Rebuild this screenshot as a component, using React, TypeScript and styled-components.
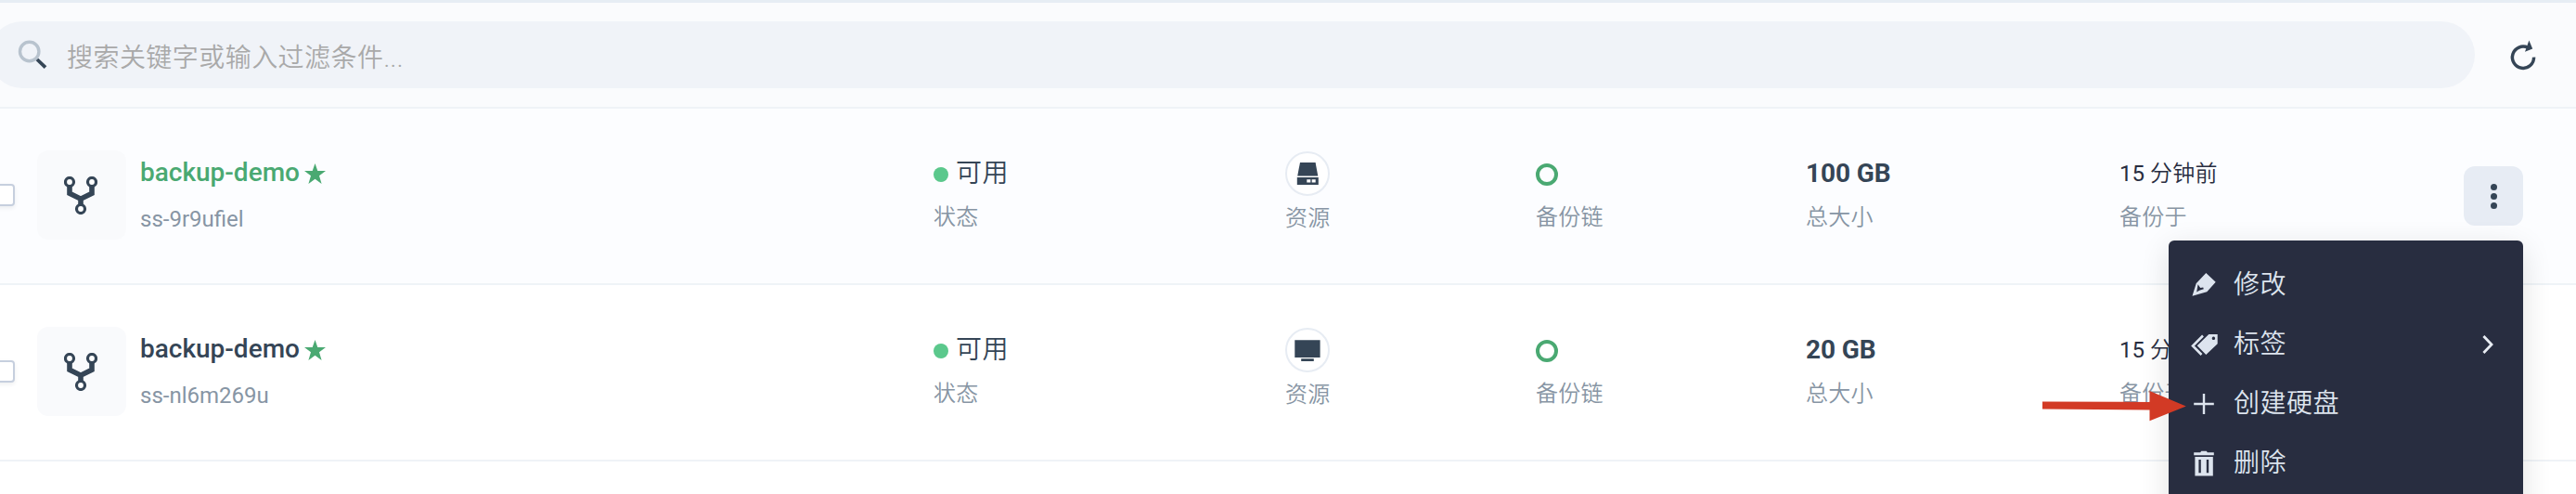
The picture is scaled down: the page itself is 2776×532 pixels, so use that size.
import React from "react";
import styled, { createGlobalStyle } from "styled-components";

const GlobalStyle = createGlobalStyle`
  html, body { margin: 0; padding: 0; }
  body {
    width: 2776px;
    height: 532px;
    overflow: hidden;
    background: #fff;
    font-family: Roboto, "Noto Sans CJK SC", sans-serif;
    color: #354556;
  }
  *, *::before, *::after { box-sizing: border-box; }
`;

const Page = styled.main`
  position: relative;
  width: 2776px;
  height: 532px;
  overflow: hidden;
`;

const Toolbar = styled.header`
  display: flex;
  align-items: flex-start;
  height: 117px;
  padding-top: 20px;
  background: #fafbfd;
  border-top: 3px solid #e6edf4;
  border-bottom: 2px solid #eff3f7;
`;

const SearchBox = styled.label`
  display: flex;
  align-items: center;
  width: 2679px;
  height: 72px;
  margin-left: -12px;
  padding-left: 30px;
  border-radius: 36px;
  background: #f0f3f8;
`;

const SearchText = styled.span`
  margin: 8px 0 0 21px;
  font-size: 28px;
  line-height: 40px;
  font-weight: 350;
  letter-spacing: 0.45px;
  color: #a9a9a9;
`;

const RefreshButton = styled.span`
  display: flex;
  margin: 17px 0 0 35px;
`;

const Row = styled.section<{ $hover?: boolean }>`
  display: flex;
  height: 190px;
  background: ${(p) => (p.$hover ? "#fcfdff" : "#fff")};
  border-bottom: 2px solid #eff3f7;
`;

const Checkbox = styled.span`
  flex: none;
  width: 24px;
  height: 24px;
  margin: 81px 24px 0 -8px;
  border: 2px solid #c6cfde;
  border-radius: 4px;
  background: #fff;
  box-shadow: 0 2px 4px rgba(40, 50, 70, 0.08);
`;

const Tile = styled.span`
  flex: none;
  width: 96px;
  height: 96px;
  margin: 45px 15px 0 0;
  padding: 28px 0 0 29px;
  border-radius: 12px;
  background: #f9fafc;
`;

const Cell = styled.div<{ $width: number }>`
  flex: none;
  display: flex;
  flex-direction: column;
  width: ${(p) => p.$width}px;
  padding-top: 46px;
`;

const Value = styled.div`
  display: flex;
  align-items: center;
  height: 48px;
  font-size: 28px;
  line-height: 48px;
  white-space: nowrap;
`;

const Name = styled(Value)<{ $active?: boolean }>`
  margin-top: -1px;
  font-weight: 500;
  color: ${(p) => (p.$active ? "#4aa972" : "#354556")};
  svg { margin: 2px 0 0 5px; }
`;

const Ident = styled.div`
  margin-top: 6px;
  font-size: 24px;
  line-height: 40px;
  color: #8795a4;
`;

const Label = styled.div<{ $shift?: number }>`
  margin-top: ${(p) => 3 + (p.$shift ?? 0)}px;
  font-size: 24px;
  line-height: 40px;
  font-weight: 350;
  letter-spacing: 0.3px;
  color: #8795a4;
`;

const StatusText = styled.span`
  margin-left: 8px;
  font-weight: 350;
  letter-spacing: 0.4px;
`;

const Dot = styled.i`
  width: 16px;
  height: 16px;
  margin-top: 2px;
  border-radius: 50%;
  background: #5bc88c;
`;

const Ring = styled.i`
  width: 24px;
  height: 24px;
  margin-top: 2px;
  border: 4px solid #4aa972;
  border-radius: 50%;
`;

const ResourceBadge = styled.span`
  display: flex;
  width: 48px;
  height: 48px;
  border: 2px solid #e7ecf3;
  border-radius: 50%;
  background: #fff;
`;

const Size = styled(Value)`
  font-weight: 700;
  letter-spacing: -0.1px;
`;

const Time = styled(Value)`
  font-size: 24px;
  white-space: pre;
  color: #282d40;
  span {
    font-weight: 350;
    letter-spacing: 0.3px;
  }
`;

const MoreButton = styled.span`
  display: flex;
  flex-direction: column;
  align-items: center;
  justify-content: center;
  gap: 3px;
  width: 64px;
  height: 64px;
  margin-top: 62px;
  border-radius: 12px;
  background: #e7ecf4;
  i {
    width: 7px;
    height: 7px;
    border-radius: 50%;
    background: #354556;
  }
`;

const Menu = styled.nav`
  position: absolute;
  left: 2337px;
  top: 259px;
  width: 382px;
  height: 320px;
  padding: 16px 32px 16px 24px;
  border-radius: 6px;
  background: #282d40;
  box-shadow: 0 8px 32px rgba(0, 0, 0, 0.12);
`;

const MenuItem = styled.div`
  display: flex;
  align-items: center;
  height: 64px;
  font-size: 28px;
  line-height: 40px;
  font-weight: 350;
  letter-spacing: 0.5px;
  color: #dde4ee;
  > svg:first-child { margin-right: 14px; }
  > svg:last-child { margin-left: auto; }
`;

const Arrow = styled.svg`
  position: absolute;
  left: 2200px;
  top: 420px;
`;

const SearchIcon = () => (
  <svg width="33" height="32" viewBox="0 0 33 32" fill="none">
    <circle cx="13.7" cy="12.5" r="10.2" stroke="#b8c3ce" strokeWidth="3.4" />
    <path d="M22 21l9 8.6" stroke="#354556" strokeWidth="3.8" />
  </svg>
);

const RefreshIcon = () => (
  <svg width="34" height="36" viewBox="0 0 34 36" fill="none">
    <path d="M22.2 11.4A11.6 11.6 0 1 0 28.6 21.6" stroke="#354556" strokeWidth="3.5" />
    <path d="M23.4 3.6L27.2 12.6L19 15.8z" fill="#354556" />
  </svg>
);

const ForkIcon = () => (
  <svg width="36" height="41" viewBox="0 0 36 41" fill="none" stroke="#354556">
    <path d="M6 10v8.2l12 6 12-6V10M18 24v7" strokeWidth="5.6" />
    <g strokeWidth="3.2" fill="#fff">
      <circle cx="6" cy="6" r="4.5" />
      <circle cx="30" cy="6" r="4.5" />
      <circle cx="18" cy="35" r="4.5" />
    </g>
  </svg>
);

const StarIcon = () => (
  <svg width="23" height="22" viewBox="0 0 23 22">
    <path d="M11.5 0l2.8 8H23l-7 5.2L18.6 22l-7.1-5.3L4.4 22 7 13.2 0 8h8.7z" fill="#4aa972" />
  </svg>
);

const DriveIcon = () => (
  <svg width="44" height="44" viewBox="0 0 44 44" fill="#354556">
    <path d="M14 10h16.6L33.3 24.6H11.2z" />
    <path fillRule="evenodd" d="M10.8 26h23v8h-23zM21.3 28.3v3.2h4v-3.2zM26.7 28.3v3.2h4v-3.2z" />
  </svg>
);

const MonitorIcon = () => (
  <svg width="44" height="44" viewBox="0 0 44 44" fill="#354556">
    <path d="M8.3 11.2h27.3V30H8.3zM15.2 31.3h13.6v2.8H15.2z" />
  </svg>
);

const EditIcon = () => (
  <svg width="32" height="32" viewBox="0 0 32 32" fill="#dde4ee">
    <path
      fillRule="evenodd"
      d="M16.3 3L26.7 12.8L17.3 23.2L1.5 27.8L5.7 14.2zM7.6 15.2L6.2 23.4L9.2 21.8L13.8 20.2L13.2 18.6L10.2 19z"
    />
  </svg>
);

const TagIcon = () => (
  <svg width="32" height="32" viewBox="0 0 32 32" fill="#dde4ee">
    <path fillRule="evenodd" d="M19.3 5h9.4v10.2L16.3 27L6.7 17.3zM24.4 7.6a1.7 1.7 0 1 0 .01 0z" />
    <path d="M13 6.5L2 17.5L11.5 27" fill="none" stroke="#dde4ee" strokeWidth="2.6" />
  </svg>
);

const PlusIcon = () => (
  <svg width="32" height="32" viewBox="0 0 32 32">
    <path d="M14 5v22M3.2 16h21.6" stroke="#dde4ee" strokeWidth="2.4" />
  </svg>
);

const TrashIcon = () => (
  <svg width="32" height="32" viewBox="0 0 32 32" fill="#dde4ee">
    <path d="M3.2 4.2h7l1-1.4h5.6l1 1.4h7v3H3.2z" />
    <path fillRule="evenodd" d="M4.4 9h19.4v20.6H4.4zM8.4 12v14.2h2.4V12zM16.8 12v14.2h2.4V12z" />
  </svg>
);

const ChevronIcon = () => (
  <svg width="12" height="22" viewBox="0 0 12 22" fill="none">
    <path d="M1.4 2l8.6 9-8.6 9" stroke="#e8ecf3" strokeWidth="2.8" />
  </svg>
);

type Snapshot = {
  id: string;
  size: string;
  icon: React.ReactNode;
  active?: boolean;
};

const snapshots: Snapshot[] = [
  { id: "ss-9r9ufiel", size: "100 GB", icon: <DriveIcon />, active: true },
  { id: "ss-nl6m269u", size: "20 GB", icon: <MonitorIcon /> },
];

const menuItems = [
  { label: "修改", icon: <EditIcon /> },
  { label: "标签", icon: <TagIcon />, nested: true },
  { label: "创建硬盘", icon: <PlusIcon /> },
  { label: "删除", icon: <TrashIcon /> },
];

export default function App() {
  return (
    <>
      <GlobalStyle />
      <Page>
        <Toolbar>
          <SearchBox>
            <SearchIcon />
            <SearchText>搜索关键字或输入过滤条件...</SearchText>
          </SearchBox>
          <RefreshButton>
            <RefreshIcon />
          </RefreshButton>
        </Toolbar>
        {snapshots.map((s) => (
          <Row key={s.id} $hover={s.active}>
            <Checkbox />
            <Tile>
              <ForkIcon />
            </Tile>
            <Cell $width={855}>
              <Name $active={s.active}>
                backup-demo
                <StarIcon />
              </Name>
              <Ident>{s.id}</Ident>
            </Cell>
            <Cell $width={379}>
              <Value>
                <Dot />
                <StatusText>可用</StatusText>
              </Value>
              <Label>状态</Label>
            </Cell>
            <Cell $width={270}>
              <ResourceBadge>{s.icon}</ResourceBadge>
              <Label $shift={1}>资源</Label>
            </Cell>
            <Cell $width={291}>
              <Value>
                <Ring />
              </Value>
              <Label>备份链</Label>
            </Cell>
            <Cell $width={338}>
              <Size>{s.size}</Size>
              <Label>总大小</Label>
            </Cell>
            <Cell $width={371}>
              <Time>
                15 <span>分钟前</span>
              </Time>
              <Label>备份于</Label>
            </Cell>
            {s.active && (
              <MoreButton>
                <i />
                <i />
                <i />
              </MoreButton>
            )}
          </Row>
        ))}
        <Menu>
          {menuItems.map((m) => (
            <MenuItem key={m.label}>
              {m.icon}
              <span>{m.label}</span>
              {m.nested && <ChevronIcon />}
            </MenuItem>
          ))}
        </Menu>
        <Arrow width="160" height="36" viewBox="0 0 160 36">
          <path d="M1 12.4L116.5 13V1L155.8 17.5L116.5 33.2V21.4L1 20.6z" fill="#d23a25" />
        </Arrow>
      </Page>
    </>
  );
}
